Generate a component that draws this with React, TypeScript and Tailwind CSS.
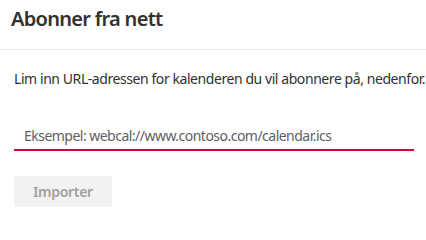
export default function App() {
  return (
    <div className="w-[426px] h-[214px] bg-white text-[#323130] font-['Noto_Sans',sans-serif] overflow-hidden">
      <div className="h-[50px] border-b border-[#edebe9] px-[11px] pt-[5px]">
        <h1 className="text-[20px] font-semibold leading-[28px] tracking-[-0.7px]">Abonner fra nett</h1>
      </div>
      <div className="px-[14px]">
        <p className="mt-[19px] text-[14px] leading-[20px] tracking-[-0.43px] whitespace-nowrap">
          Lim inn URL-adressen for kalenderen du vil abonnere på, nedenfor.
        </p>
        <div className="mt-[34px] w-[400px] border-b-2 border-[#d6003a] px-[10px] pb-[2px]">
          <input
            className="w-full bg-transparent text-[14px] leading-[20px] tracking-[-0.52px] outline-none placeholder:text-[#605e5c]"
            placeholder="Eksempel: webcal://www.contoso.com/calendar.ics"
          />
        </div>
        <button className="mt-[25px] h-[31px] w-[98px] rounded-[2px] bg-[#f3f2f1] text-[14px] font-semibold tracking-[-0.3px] text-[#a19f9d]">
          Importer
        </button>
      </div>
    </div>
  );
}
